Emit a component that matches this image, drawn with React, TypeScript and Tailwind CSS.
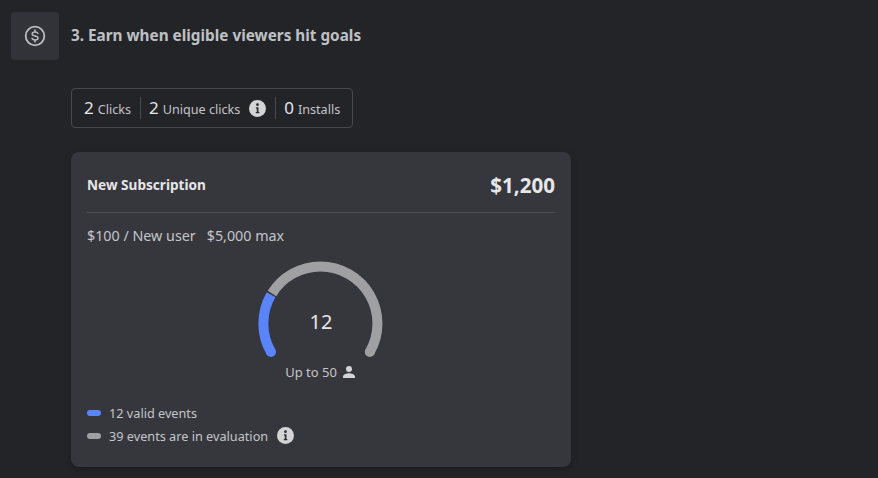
import React from "react";

const Info = ({ size = 16 }: { size?: number }) => (
  <svg width={size} height={size} viewBox="0 0 16 16" className="shrink-0 block">
    <circle cx="8" cy="8" r="8" fill="#d4d4d6" />
    <circle cx="8" cy="4.400" r="1.300" fill="#2c2d31" />
    <path d="M6.500 6.800h2.400v4.600h.8v1.100H6.400v-1.100h.9V7.900h-.8z" fill="#2c2d31" />
  </svg>
);

const Stat = ({ n, label }: { n: string; label: string }) => (
  <span className="flex items-baseline gap-[4px]">
    <span className="text-[17px] text-[#e6e6e8]">{n}</span>
    <span className="text-[12.6px] text-[#c4c5c9]">{label}</span>
  </span>
);

const Gauge = () => (
  <svg width="140" height="110" viewBox="0 0 140 110" className="block">
    <path d="M20 94 A57 57 0 0 1 20.100 36.800" fill="none" stroke="#5a84fa" strokeWidth="10" />
    <circle cx="20" cy="94" r="5" fill="#5a84fa" />
    <path d="M21 35.500 A57 57 0 0 1 69.400 8.500 A57 57 0 0 1 118.800 94" fill="none" stroke="#a0a0a2" strokeWidth="10" />
    <circle cx="118.800" cy="94" r="5" fill="#a0a0a2" />
  </svg>
);

export default function App() {
  return (
    <div
      className="w-[878px] h-[478px] overflow-hidden bg-[#232428] text-[#c6c7ca] pt-[12px] pl-[11px]"
      style={{ fontFamily: '"Noto Sans", sans-serif' }}
    >
      <div className="flex items-start gap-[12px]">
        <div className="w-[48px] h-[48px] rounded-[4px] bg-[#313338] flex items-center justify-center shrink-0">
          <svg width="22" height="22" viewBox="0 0 22 22" fill="none" stroke="#bdbdc0" strokeWidth="1.800">
            <circle cx="11" cy="11" r="9.300" />
            <path d="M13.900 8.500c-.4-.9-1.500-1.500-2.900-1.500-1.600 0-2.800.8-2.800 2 0 2.700 5.800 1.300 5.800 4 0 1.200-1.300 2-3 2-1.500 0-2.600-.6-3-1.600M11 5v2M11 15v2" strokeWidth="1.500" strokeLinecap="round" />
          </svg>
        </div>
        <div className="flex-1">
          <h2 className="text-[15.300px] font-bold leading-[20px] mt-[13px] text-[#bfc0c4]">3. Earn when eligible viewers hit goals</h2>
          <div className="mt-[43px] inline-flex items-center h-[40px] px-[12px] border border-[#47484d] rounded-[4px]">
            <Stat n="2" label="Clicks" />
            <div className="w-px h-[22px] bg-[#47484d] ml-[9px] mr-[8px]" />
            <Stat n="2" label="Unique clicks" />
            <span className="ml-[9px]"><Info size={17} /></span>
            <div className="w-px h-[22px] bg-[#47484d] ml-[9px] mr-[8px]" />
            <Stat n="0" label="Installs" />
          </div>
          <div className="mt-[24px] w-[500px] h-[315px] bg-[#36373d] rounded-[8px] px-[16px] shadow-[0_2px_6px_rgba(0,0,0,0.25)]">
            <div className="h-[61px] pt-[6px] flex items-center justify-between border-b border-[#4e4f54]">
              <span className="text-[13.600px] font-bold text-[#e6e6e8]">New Subscription</span>
              <span className="text-[20.600px] font-bold text-[#e6e6e8]">$1,200</span>
            </div>
            <div className="mt-[13px] flex gap-[11px] text-[14.300px] leading-[20px] text-[#c4c5c9]">
              <span>$100 / New user</span>
              <span>$5,000 max</span>
            </div>
            <div className="relative flex flex-col items-center mt-[12px]">
              <Gauge />
              <span className="absolute top-[50px] text-[20px] leading-[28px] text-[#e6e6e8]">12</span>
              <div className="flex items-center gap-[4px] text-[13px] leading-[16px] text-[#c4c5c9] -mt-[4px]">
                <span>Up to 50</span>
                <svg width="16" height="16" viewBox="0 0 24 24" fill="#d4d4d6">
                  <path d="M12 12a4.500 4.500 0 1 0 0-9 4.500 4.500 0 0 0 0 9zm0 2c-3.300 0-9 1.700-9 5v2h18v-2c0-3.300-5.700-5-9-5z" />
                </svg>
              </div>
            </div>
            <div className="mt-[25px] flex flex-col gap-[6px] text-[12.700px] leading-[16px] text-[#c4c5c9]">
              <div className="flex items-center gap-[8px]">
                <span className="w-[14px] h-[6px] rounded-full bg-[#5a84fa]" />
                <span>12 valid events</span>
              </div>
              <div className="flex items-center gap-[8px]">
                <span className="w-[14px] h-[6px] rounded-full bg-[#a0a0a2]" />
                <span>39 events are in evaluation</span>
                <span className="ml-[1px]"><Info size={17} /></span>
              </div>
            </div>
          </div>
        </div>
      </div>
    </div>
  );
}
